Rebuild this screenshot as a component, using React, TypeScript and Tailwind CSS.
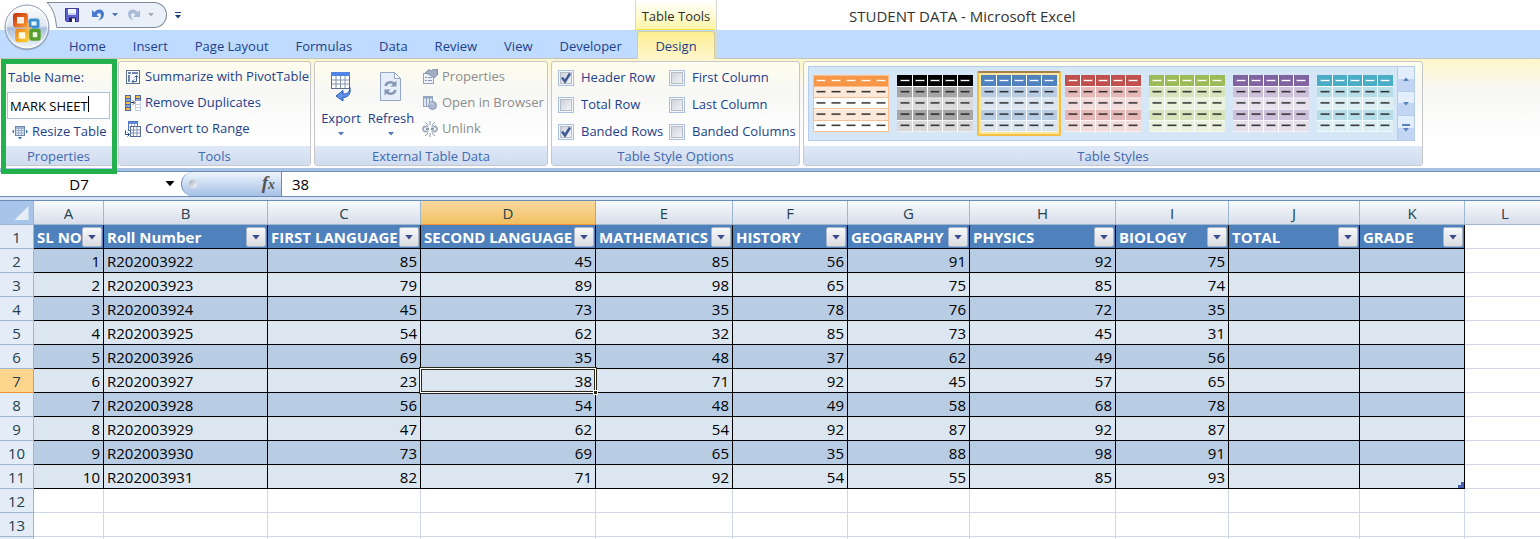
import type { ReactNode } from 'react';
import clsx from 'clsx';

const TABS = ['Home', 'Insert', 'Page Layout', 'Formulas', 'Data', 'Review', 'View', 'Developer'];

const COLUMNS = [
  { letter: 'A', title: 'SL NO', width: 'w-[70px]' },
  { letter: 'B', title: 'Roll Number', width: 'w-[164px]' },
  { letter: 'C', title: 'FIRST LANGUAGE', width: 'w-[153px]' },
  { letter: 'D', title: 'SECOND LANGUAGE', width: 'w-[175px]' },
  { letter: 'E', title: 'MATHEMATICS', width: 'w-[137px]' },
  { letter: 'F', title: 'HISTORY', width: 'w-[115px]' },
  { letter: 'G', title: 'GEOGRAPHY', width: 'w-[122px]' },
  { letter: 'H', title: 'PHYSICS', width: 'w-[146px]' },
  { letter: 'I', title: 'BIOLOGY', width: 'w-[113px]' },
  { letter: 'J', title: 'TOTAL', width: 'w-[131px]' },
  { letter: 'K', title: 'GRADE', width: 'w-[105px]' },
];

const STUDENTS: (string | number)[][] = [
  [1, 'R202003922', 85, 45, 85, 56, 91, 92, 75, '', ''],
  [2, 'R202003923', 79, 89, 98, 65, 75, 85, 74, '', ''],
  [3, 'R202003924', 45, 73, 35, 78, 76, 72, 35, '', ''],
  [4, 'R202003925', 54, 62, 32, 85, 73, 45, 31, '', ''],
  [5, 'R202003926', 69, 35, 48, 37, 62, 49, 56, '', ''],
  [6, 'R202003927', 23, 38, 71, 92, 45, 57, 65, '', ''],
  [7, 'R202003928', 56, 54, 48, 49, 58, 68, 78, '', ''],
  [8, 'R202003929', 47, 62, 54, 92, 87, 92, 87, '', ''],
  [9, 'R202003930', 73, 69, 65, 35, 88, 98, 91, '', ''],
  [10, 'R202003931', 82, 71, 92, 54, 55, 85, 93, '', ''],
];

const ACTIVE = { row: 7, col: 3 };

const STYLES = [
  { name: 'Orange', head: '#f79646', odd: '#fde9d9', even: '#ffffff', outlined: true },
  { name: 'Black', head: '#000000', odd: '#a6a6a6', even: '#d9d9d9' },
  { name: 'Blue', head: '#4f81bd', odd: '#b8cce4', even: '#dbe5f1', selected: true },
  { name: 'Red', head: '#c0504d', odd: '#e6b9b8', even: '#f2dcdb' },
  { name: 'Green', head: '#9bbb59', odd: '#d7e4bc', even: '#eaf1dd' },
  { name: 'Purple', head: '#8064a2', odd: '#ccc0da', even: '#e5e0ec' },
  { name: 'Aqua', head: '#4bacc6', odd: '#b6dde8', even: '#dbeef3' },
];

/* ---------- icons ---------- */

const OfficeLogo = () => (
  <svg viewBox="0 0 48 48" className="size-12">
    <defs>
      <linearGradient id="orb" x1="0" y1="0" x2="0" y2="1">
        <stop offset="0" stopColor="#ffffff" />
        <stop offset="0.48" stopColor="#dfe5ee" />
        <stop offset="0.52" stopColor="#a9bddb" />
        <stop offset="1" stopColor="#f4f9ff" />
      </linearGradient>
      <linearGradient id="red" x1="0" y1="0" x2="1" y2="1">
        <stop offset="0" stopColor="#c93a12" />
        <stop offset="1" stopColor="#f7912c" />
      </linearGradient>
      <linearGradient id="yellow" x1="0" y1="0" x2="1" y2="1">
        <stop offset="0" stopColor="#f08a1c" />
        <stop offset="1" stopColor="#fccb2b" />
      </linearGradient>
    </defs>
    <circle cx="24" cy="25.5" r="22" fill="#7f8da3" opacity="0.5" />
    <circle cx="24" cy="24" r="22" fill="url(#orb)" stroke="#8d9aae" />
    <circle cx="24" cy="24" r="20.5" fill="none" stroke="#ffffff" strokeOpacity="0.8" />
    <rect x="27" y="17" width="8" height="7" rx="1" fill="#eaf4fc" stroke="#3a8fd0" strokeWidth="3" />
    <rect x="14" y="27.500" width="10" height="10" rx="1" fill="#fff8e0" stroke="url(#yellow)" strokeWidth="3.500" />
    <rect x="28" y="27.500" width="8" height="8.500" rx="1" fill="#f1f8e6" stroke="#55a02e" strokeWidth="3.500" />
    <rect x="12" y="12" width="11" height="10.500" rx="1" fill="#fbeee6" stroke="url(#red)" strokeWidth="4" />
    <path d="M25 20v8M22 25h7" stroke="#f7b45c" strokeWidth="1.500" />
  </svg>
);

const SaveIcon = () => (
  <svg viewBox="0 0 16 16" className="size-4">
    <path d="M1.500 1.500h13v13h-12l-1-1z" fill="#5f62cf" stroke="#3a3a9e" />
    <path d="M4 2h8v6H4z" fill="#f2f5fd" />
    <path d="M4 6h8v2H4z" fill="#c7d3ee" />
    <path d="M5 10.500h7V15H5z" fill="#22244f" />
    <path d="M8 11.500h3V15H8z" fill="#ffffff" />
  </svg>
);

const UndoIcon = ({ className }: { className: string }) => (
  <svg viewBox="0 0 16 16" className={clsx('size-4', className)}>
    <path d="M2 3v7h7L6.700 7.700C8.500 5.500 11 6 11 8.200c0 2-1 3.600-3 5.300 4-1 6-3.300 6-6.300 0-4.700-6-6.500-9.500-2z" fill="currentColor" />
  </svg>
);

const Caret = ({ className }: { className?: string }) => (
  <svg viewBox="0 0 6 4" className={clsx('h-1 w-1.5', className)}>
    <path d="M0 0h6L3 3.500z" fill="currentColor" />
  </svg>
);

const ResizeIcon = () => (
  <svg viewBox="0 0 16 16" className="size-4">
    <rect x="3.500" y="2.500" width="9" height="9" fill="#dfe8f4" stroke="#6d86ae" />
    <path d="M4 4h8" stroke="#9fb6d8" strokeWidth="2" />
    <path d="M6.500 3v8M9.500 3v8M4 6.500h8M4 9h8" stroke="#9fb0cc" />
    <path d="M2 5.500v4L0 7.500zM14 5.500v4l2-2zM6 13h4l-2 2.500z" fill="#2d6cc0" />
  </svg>
);

const PivotIcon = () => (
  <svg viewBox="0 0 16 16" className="size-4">
    <rect x="1.500" y="1.500" width="13" height="13" fill="#f8fafd" stroke="#5d6f8f" />
    <path d="M3 3h3v2H3zM7 3h6v2H7zM3 6h2v7H3z" fill="#6f86ae" />
    <path d="M7 12.500h4.500V7M7 12.500l2-2M7 12.500l2 2M11.500 6.500l-2 2M11.500 6.500l2 2" fill="none" stroke="#3f5f96" />
  </svg>
);

const DuplicatesIcon = () => (
  <svg viewBox="0 0 16 16" className="size-4">
    <path d="M0 0h6v16H0z" fill="#4a6da8" />
    <path d="M1 1h4v2H1zM1 7h4v2H1z" fill="#f5b64a" />
    <path d="M1 4h4v2H1zM1 10h4v2H1z" fill="#86a6d8" />
    <path d="M1 13h4v2H1z" fill="#f5b64a" />
    <path d="M10 0h6v6h-6z" fill="#4a6da8" />
    <path d="M11 1h4v2h-4z" fill="#f5b64a" />
    <path d="M11 4h4v2h-4z" fill="#86a6d8" />
    <path d="M10.500 7v8.500h5V7M10.500 9.500h5M10.500 12.500h5" fill="#ffffff" stroke="#c3cfe2" />
    <path d="M6 7.500h3M8 5.500l2 2-2 2" fill="none" stroke="#333d55" />
  </svg>
);

const RangeIcon = () => (
  <svg viewBox="0 0 16 16" className="size-4">
    <rect x="3.500" y="0.500" width="9" height="9" fill="#ffffff" stroke="#4f74b8" />
    <path d="M4 2h8" stroke="#5f8be0" strokeWidth="2" />
    <path d="M6.500 3v6M9.500 3v6M4 6h8" stroke="#9ab0d6" />
    <rect x="5.500" y="5.500" width="10" height="10" fill="#ffffff" stroke="#566c93" />
    <path d="M8.500 6v9M12 6v9M6 9h9M6 12h9" stroke="#7d92b8" />
    <path d="M.5 9.500v4H4M2.500 11.500l2 2-2 2" fill="none" stroke="#2c4f8f" />
  </svg>
);

const ExportIcon = () => (
  <svg viewBox="0 0 24 32" className="h-8 w-6">
    <rect x="2.500" y="2.500" width="18" height="16" fill="#ffffff" stroke="#5e6f8e" />
    <path d="M2 2h19v4H2z" fill="#4f83e6" />
    <path d="M7 6v12M11.500 6v12M16 6v12M3 10h17M3 14h17" stroke="#8392ad" />
    <path d="M20.500 16.500c1 5-1.500 7.500-6.500 7.500v-3.500l-7 5.500 7 5v-3.500c6 0 8.500-5 6.500-11z" fill="#5e93ea" stroke="#2b5bb5" />
  </svg>
);

const RefreshIcon = () => (
  <svg viewBox="0 0 24 32" className="h-8 w-6">
    <path d="M1.500 2.500h14l6 6v22h-20z" fill="#e6eef9" stroke="#93a7c8" />
    <path d="M15.500 2.500v6h6z" fill="#ffffff" stroke="#93a7c8" />
    <path d="M6.500 16c1-4 6-5 9-2M16.500 20c-1 4-6 5-9 2" fill="none" stroke="#8496b3" strokeWidth="2.500" />
    <path d="M17.500 10.500v6h-6zM5.500 25.500v-6h6z" fill="#8496b3" />
  </svg>
);

const PropertiesIcon = () => (
  <svg viewBox="0 0 16 16" className="size-4">
    <rect x="1.500" y="4.500" width="10" height="10" fill="#eef2f8" stroke="#93a3bf" />
    <path d="M3 8.500h2M6 8.500h4M3 11.500h2M6 11.500h4" stroke="#8799b8" />
    <path d="M3 4l4-3.500L9 2l2-1.500h4.500V6L12 9 9 6.500 6 5z" fill="#a3aec2" stroke="#8492aa" />
  </svg>
);

const BrowserIcon = () => (
  <svg viewBox="0 0 16 16" className="size-4">
    <rect x="1.500" y="1.500" width="9" height="10" fill="#dfe6f2" stroke="#95a6c4" />
    <path d="M1 2.500h10" stroke="#95a6c4" strokeWidth="2" />
    <path d="M4.500 3v8M7.500 3v8" stroke="#95a6c4" />
    <circle cx="10.500" cy="10.500" r="4" fill="#a9b7cf" stroke="#8d9db9" />
    <path d="M8 9.500c1-2 3-1.500 3 0" fill="none" stroke="#dde5f2" />
  </svg>
);

const UnlinkIcon = () => (
  <svg viewBox="0 0 16 16" className="size-4">
    <path d="M6.500 5.500h-3a2.500 2.500 0 0 0 0 5h3M9.500 5.500h3a2.500 2.500 0 0 1 0 5h-3" fill="none" stroke="#a3aec0" strokeWidth="2" />
    <path d="M4 8h3M9 8h3" stroke="#8d99ad" strokeWidth="2" />
    <path d="M8 0v4M8 12v4M3 1l3 3M13 1l-3 3M3 15l3-3M13 15l-3-3" stroke="#8f9bb0" />
  </svg>
);

const StyleThumb = ({ style }: { style: (typeof STYLES)[number] }) => (
  <svg viewBox="0 0 76 57" className="h-[57px] w-[76px]">
    <rect width="76" height="57" fill="#ffffff" />
    <rect width="76" height="11" fill={style.head} />
    {[0, 1, 2, 3].map(r => (
      <rect key={r} y={12 + r * 11.3} width="76" height="10.500" fill={r % 2 === 0 ? style.odd : style.even} />
    ))}
    {!style.outlined && [1, 2, 3, 4].map(c => (
      <rect key={c} x={c * 15} width="1" height="57" fill="#ffffff" />
    ))}
    {[0, 1, 2, 3, 4].map(r =>
      [0, 1, 2, 3, 4].map(c => (
        <g key={`${r}-${c}`} fill={r === 0 ? '#ffffff' : '#1c1c1c'}>
          <rect x={3 + c * 15} y={4.5 + r * 11.2} width="10" height="2" opacity="0.350" />
          <rect x={4 + c * 15} y={5 + r * 11.2} width="8" height="1" />
        </g>
      ))
    )}
    {style.outlined && (
      <path d="M.5.500h75v56H.5zM0 11.500h76M0 22.500h76M0 33.500h76M0 45.500h76" fill="none" stroke="#fabf8f" />
    )}
  </svg>
);

/* ---------- ribbon ---------- */

const Group = ({ title, className, children }: { title: string; className?: string; children: ReactNode }) => (
  <section
    className={clsx(
      'flex h-[105px] shrink-0 flex-col overflow-hidden rounded-[3px] border border-[#c5c7ca] bg-linear-to-b from-[#fffdec] via-[#f7f7f6] via-30% to-white to-75%',
      className
    )}
  >
    <div className="flex flex-1 pt-0.5">{children}</div>
    <h2 className="h-[19px] bg-linear-to-b from-[#dfe8f5] to-[#d0dcf0] text-center leading-5 text-[#4069b0]">{title}</h2>
  </section>
);

const SmallButton = ({ icon, label, disabled }: { icon: ReactNode; label: string; disabled?: boolean }) => (
  <button disabled={disabled} className={clsx('flex h-[26px] items-center gap-1 whitespace-nowrap', disabled && 'text-[#8d8d8d]')}>
    {icon}
    {label}
  </button>
);

const BigButton = ({ icon, label }: { icon: ReactNode; label: string }) => (
  <button className="flex w-[50px] flex-col items-center pt-1.5">
    {icon}
    <span className="mt-2 leading-4">{label}</span>
    <Caret className="mt-1.5 text-[#4f78b5]" />
  </button>
);

const CheckOption = ({ label, checked }: { label: string; checked?: boolean }) => (
  <label className="relative flex h-[27px] items-center gap-[7px] whitespace-nowrap">
    <input
      type="checkbox"
      defaultChecked={checked}
      className="peer size-4 shrink-0 appearance-none border border-[#a9c0de] bg-linear-to-br from-[#c9ced6] to-[#f8f9fa] shadow-[inset_0_0_0_1px_#f3f6fa,inset_0_0_0_2px_#b5bcc8]"
    />
    <svg viewBox="0 0 16 16" className="pointer-events-none absolute left-0 hidden size-4 peer-checked:block">
      <path d="M4 7.500l3 4L12 3.500" fill="none" stroke="#3f5d92" strokeWidth="2.500" />
    </svg>
    {label}
  </label>
);

function Ribbon() {
  return (
    <div className="flex h-[110px] gap-[3px] border-t border-[#c3c4bf] bg-linear-to-b from-[#fff6cc] from-2% via-[#f7f7f6] via-30% to-white to-75% pt-0.5 pl-0.5">
      <div className="relative shrink-0">
        <Group title="Properties" className="w-[113px]">
          <div className="flex flex-col pl-1">
            <label htmlFor="table-name" className="flex h-7 items-center pl-px">Table Name:</label>
            <input
              id="table-name"
              defaultValue="MARK SHEET"
              className="h-[27px] w-[103px] border border-[#abc1de] bg-white px-0.5 text-black outline-none"
            />
            <div className="pl-[5px]">
              <SmallButton icon={<ResizeIcon />} label="Resize Table" />
            </div>
          </div>
        </Group>
        <span className="absolute top-[35px] left-[86px] h-4 w-px bg-black" />
        <div className="pointer-events-none absolute -top-0.5 -right-0.5 -left-px z-10 h-[115px] border-[5px] border-[#22b14c]" />
      </div>

      <Group title="Tools" className="w-[193px]">
        <div className="pl-1.5">
          <SmallButton icon={<PivotIcon />} label="Summarize with PivotTable" />
          <SmallButton icon={<DuplicatesIcon />} label="Remove Duplicates" />
          <SmallButton icon={<RangeIcon />} label="Convert to Range" />
        </div>
      </Group>

      <Group title="External Table Data" className="w-[234px]">
        <div className="flex pl-px">
          <BigButton icon={<ExportIcon />} label="Export" />
          <BigButton icon={<RefreshIcon />} label="Refresh" />
        </div>
        <div className="pl-1.5">
          <SmallButton icon={<PropertiesIcon />} label="Properties" disabled />
          <SmallButton icon={<BrowserIcon />} label="Open in Browser" disabled />
          <SmallButton icon={<UnlinkIcon />} label="Unlink" disabled />
        </div>
      </Group>

      <Group title="Table Style Options" className="w-[249px]">
        <div className="grid grid-cols-[111px_1fr] content-start pl-1.5">
          <CheckOption label="Header Row" checked />
          <CheckOption label="First Column" />
          <CheckOption label="Total Row" />
          <CheckOption label="Last Column" />
          <CheckOption label="Banded Rows" checked />
          <CheckOption label="Banded Columns" />
        </div>
      </Group>

      <Group title="Table Styles" className="w-[620px]">
        <div className="mt-0.5 ml-1 flex h-[75px]">
          <div className="flex items-center border border-[#b4cdea] bg-[#d5e6f7]">
            {STYLES.map(style => (
              <button
                key={style.name}
                aria-label={style.name}
                className={clsx(
                  'flex h-[65px] w-[84px] items-center justify-center',
                  style.selected && 'rounded-xs border-2 border-[#f3c13f] border-t-[#a5814f] bg-[#fde6a0]'
                )}
              >
                <StyleThumb style={style} />
              </button>
            ))}
          </div>
          <div className="flex w-[17px] flex-col border border-l-0 border-[#b4cdea]">
            {['Row up', 'Row down', 'More'].map((name, i) => (
              <button
                key={name}
                aria-label={name}
                className="flex flex-1 flex-col items-center justify-center gap-0.5 border-b border-[#b4cdea] bg-linear-to-b from-[#e3eefd] from-50% to-[#c2d6f3] to-50% text-[#5a82bd] last:border-b-0"
              >
                {i === 2 && <span className="h-0.5 w-2 bg-[#5a82bd]" />}
                <Caret className={clsx(i === 0 && 'rotate-180')} />
              </button>
            ))}
          </div>
        </div>
      </Group>
    </div>
  );
}

function TitleAndTabs() {
  return (
    <header className="relative flex h-[58px] bg-linear-to-b from-white from-[30px] to-[#bfdbff] to-[30px]">
      <div className="w-[635px] shrink-0">
        <div className="flex h-[30px] items-start pt-0.5 pl-[46px]">
          <svg viewBox="0 0 11 26" className="h-[26px] w-[11px] shrink-0">
            <path d="M1 .5C6 5 10 14 10.500 25.500H11V.5z" fill="#e9f0f9" />
            <path d="M11 .5H1C6 5 10 14 10.500 25.500" fill="none" stroke="#7f8894" />
          </svg>
          <div className="flex h-[26px] w-[110px] items-center rounded-r-full border border-l-0 border-[#7f8894] bg-[#e9f0f9] pl-[7px]">
            <button aria-label="Save"><SaveIcon /></button>
            <button aria-label="Undo" className="ml-2.5"><UndoIcon className="text-[#4a7bd0]" /></button>
            <button aria-label="Undo list" className="ml-1.5"><Caret className="text-[#4f78b5]" /></button>
            <button aria-label="Redo" className="ml-2"><UndoIcon className="-scale-x-100 text-[#a9bbd6]" /></button>
            <button aria-label="Redo list" className="ml-1.5"><Caret className="text-[#a7afbb]" /></button>
          </div>
          <button aria-label="Customize" className="mt-2.5 ml-2 flex flex-col items-center gap-0.5 text-[#1c3f7d]">
            <span className="h-px w-1.5 bg-[#1c3f7d]" />
            <Caret />
          </button>
        </div>
        <nav className="flex h-7 items-center gap-[27px] pt-1.5 pl-[69px]">
          {TABS.map(tab => (
            <button key={tab} className="whitespace-nowrap">{tab}</button>
          ))}
        </nav>
      </div>

      <div className="w-[82px] shrink-0 border-x border-[#d4d8d6]">
        <div className="h-[30px] border-b border-[#f7e04a] bg-linear-to-b from-white to-[#fdf6a8] pt-1.5 text-center leading-5 text-[#2f2f2f]">
          Table Tools
        </div>
        <button className="mx-px mt-px h-[28px] w-[78px] rounded-t-[3px] border border-b-0 border-[#d2cf9f] bg-linear-to-b from-[#fcee8e] to-[#fff6cc] pt-0.5 text-center">
          Design
        </button>
      </div>

      <h1 className="pt-1.5 pl-[132px] text-[15px] leading-5 text-[#333]">STUDENT DATA - Microsoft Excel</h1>
      <button aria-label="Office menu" className="absolute top-[3px] left-[3px]"><OfficeLogo /></button>
    </header>
  );
}

function FormulaBar() {
  return (
    <div className="border-t-[3px] border-[#a9c2e3] bg-[#d9e5f5] pb-[3px]">
      <div className="flex h-[26px] border-y border-[#6a8cb8] bg-white text-[15px] text-black">
        <input aria-label="Name box" defaultValue="D7" className="w-[158px] min-w-0 text-center outline-none" />
        <button aria-label="Names" className="flex w-[23px] items-center justify-center">
          <Caret className="h-1.5 w-2.5" />
        </button>
        <div className="flex w-[101px] items-center justify-between rounded-l-full border-r border-l border-[#6a8cb8] bg-linear-to-b from-[#eff5fd] to-[#a5c0e5] pr-1.5 pl-[7px]">
          <span className="size-2 rounded-full bg-linear-to-br from-[#a3abb8] to-white" />
          <button aria-label="Insert function" className="font-['Liberation_Serif',serif] text-[19px] leading-6 font-bold text-[#555] italic">
            f<span className="text-[14px]">x</span>
          </button>
        </div>
        <input aria-label="Formula" defaultValue="38" className="min-w-0 flex-1 pl-2.5 outline-none" />
      </div>
    </div>
  );
}

/* ---------- sheet ---------- */

const RowHeader = ({ row }: { row: number | null }) => (
  <th
    className={clsx(
      'border-r border-b p-0 pt-0.5 text-center font-normal text-[#24414f]',
      row === ACTIVE.row ? 'border-[#f29536] bg-[#ffd58d]' : 'border-[#9eb6ce] bg-[#e4ecf7]'
    )}
  >
    {row}
  </th>
);

function Sheet() {
  return (
    <table className="w-[calc(100%+6px)] table-fixed border-separate border-spacing-0 border-t border-[#6a8cb8] bg-white text-[15px] leading-[21px] text-black">
      <colgroup>
        <col className="w-[34px]" />
        {COLUMNS.map(col => <col key={col.letter} className={col.width} />)}
        <col />
      </colgroup>
      <thead>
        <tr className="h-6 text-[#24414f]">
          <th className="border-r border-b border-[#9eb6ce] bg-[#a9c4e9] p-0">
            <svg viewBox="0 0 33 23" className="block h-[23px] w-full">
              <path d="M28.500 5v14h-14z" fill="#e6edf6" />
            </svg>
          </th>
          {[...COLUMNS.map(c => c.letter), 'L'].map((letter, c) => (
            <th
              key={letter}
              className={clsx(
                'border-r border-b p-0 pt-0.5 text-center font-normal',
                c === ACTIVE.col
                  ? 'border-[#f29536] bg-linear-to-b from-[#f9d99f] to-[#f1c15f]'
                  : 'border-[#9eb6ce] bg-linear-to-b from-[#f8fafc] to-[#d6deea]'
              )}
            >
              {letter}
            </th>
          ))}
        </tr>
      </thead>
      <tbody>
        <tr className="h-6">
          <RowHeader row={1} />
          {COLUMNS.map(col => (
            <th key={col.letter} className="relative overflow-hidden border-r border-b border-black bg-[#4f81bd] p-0 pt-0.5 pl-[3px] text-left font-bold whitespace-nowrap text-white">
              {col.title}
              <button
                aria-label={`Filter ${col.title}`}
                className="absolute top-0.5 right-px flex size-5 items-center justify-center rounded-xs border border-[#a9b5c8] bg-linear-to-b from-[#f7f8fa] to-[#dadcdf]"
              >
                <Caret className="h-[5px] w-2 text-[#3b4a8c]" />
              </button>
            </th>
          ))}
          <td className="border-r border-b border-[#d0d7e5]" />
        </tr>
        {STUDENTS.map((values, i) => (
          <tr key={i} className="h-6">
            <RowHeader row={i + 2} />
            {values.map((value, c) => {
              const active = i + 2 === ACTIVE.row && c === ACTIVE.col;
              return (
                <td
                  key={c}
                  className={clsx(
                    'relative border-r border-b border-black p-0 pt-0.5',
                    i % 2 === 0 ? 'bg-[#b8cce4]' : 'bg-[#dce6f1]',
                    c === 1 ? 'pl-[3px] text-left' : 'pr-[3px] text-right',
                    active && 'z-10'
                  )}
                >
                  {value}
                  {active && (
                    <>
                      <span className="pointer-events-none absolute -inset-0.5 border border-[#2b2618] shadow-[inset_0_0_0_1px_#fff,inset_0_0_0_2px_#2b2618]" />
                      <span className="absolute -right-[3px] -bottom-[3px] size-[5px] border border-white bg-[#2b2618]" />
                    </>
                  )}
                  {i === 9 && c === 10 && (
                    <svg viewBox="0 0 6 6" className="absolute right-0 bottom-0 size-1.5">
                      <path d="M3 0h3v6H0V3h3z" fill="#4a5fb0" />
                    </svg>
                  )}
                </td>
              );
            })}
            <td className="border-r border-b border-[#d0d7e5]" />
          </tr>
        ))}
        {[12, 13, null].map((row, i) => (
          <tr key={i} className="h-6">
            <RowHeader row={row} />
            {[...COLUMNS, null].map((_, c) => (
              <td key={c} className="border-r border-b border-[#d0d7e5]" />
            ))}
          </tr>
        ))}
      </tbody>
    </table>
  );
}

export default function App() {
  return (
    <main className="h-screen overflow-hidden bg-white font-['Open_Sans','Noto_Sans',sans-serif] text-[13px] text-[#1e3f8a]">
      <TitleAndTabs />
      <Ribbon />
      <FormulaBar />
      <Sheet />
    </main>
  );
}
